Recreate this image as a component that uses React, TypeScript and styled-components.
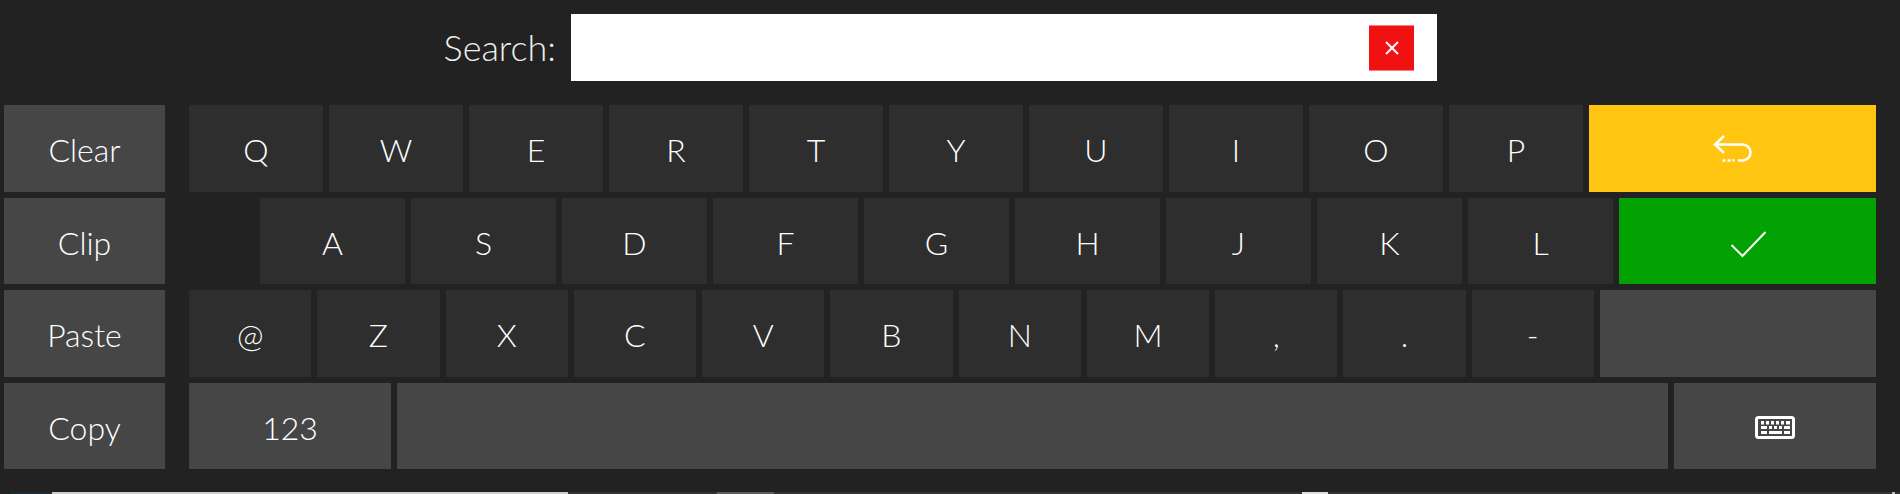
import React from 'react';
import styled, { createGlobalStyle } from 'styled-components';

const GlobalStyle = createGlobalStyle`
    html, body {
        margin: 0;
        height: 100%;
        overflow: hidden;
        background: #222222;
    }
`;

const Page = styled.div`
    height: 494px;
    overflow: hidden;
    display: flex;
    flex-direction: column;
    background: #222222;
    color: #ffffff;
    font-family: "Lato", "Liberation Sans", sans-serif;
    font-weight: 300;
`;

const SearchBar = styled.div`
    display: grid;
    grid-template-columns: 571px 866px;
    align-items: center;
    padding-top: 14px;
`;

const SearchLabel = styled.label`
    font-size: 36px;
    color: #eeeeee;
    text-align: right;
    padding: 0 15px 2px 0;
`;

const SearchField = styled.div`
    height: 67px;
    background: #ffffff;
    display: flex;
    align-items: center;
    justify-content: flex-end;
    padding-right: 23px;
`;

const ClearButton = styled.button`
    width: 45px;
    height: 46px;
    padding: 0;
    display: flex;
    align-items: center;
    justify-content: center;
    background: #f21111;
    border: 0;
    border-top: 1px solid #fb7b7b;
    border-bottom: 1px solid #fb7b7b;
`;

const Keyboard = styled.div`
    display: flex;
    gap: 24px;
    margin-top: 24px;
    padding: 0 24px 0 4px;
`;

const SideColumn = styled.div`
    width: 161px;
    flex: none;
    display: grid;
    grid-auto-rows: 86.5px;
    gap: 6px;
`;

const KeyRows = styled.div`
    flex: 1;
    display: grid;
    grid-auto-rows: 86.5px;
    gap: 6px;
`;

const KeyRow = styled.div<{ $indent?: number }>`
    display: flex;
    gap: 6px;
    padding-left: ${(p) => p.$indent || 0}px;
`;

const KEY_COLORS = {
    letter: '#2e2e2e',
    action: '#464646',
    enter: '#ffc511',
    ok: '#02a202',
};

const Key = styled.button<{ $width?: number; $kind?: keyof typeof KEY_COLORS }>`
    width: ${(p) => (p.$width ? `${p.$width}px` : '100%')};
    flex: ${(p) => (p.$width ? 'none' : '1')};
    height: 100%;
    padding: 0;
    display: flex;
    align-items: center;
    justify-content: center;
    border: 0;
    border-radius: 0;
    background: ${(p) => KEY_COLORS[p.$kind || 'letter']};
    color: #ffffff;
    font-family: inherit;
    font-weight: 300;
    font-size: 32px;
`;

const KeyText = styled.span`
    padding-top: 3px;
`;

const KeyboardSvg = styled.svg`
    margin-top: 4px;
`;

const BottomStrip = styled.div`
    display: flex;
    height: 2px;
    margin-top: 23px;
`;

const StripPart = styled.div<{ $width: number; $color: string }>`
    width: ${(p) => p.$width}px;
    flex: none;
    background: ${(p) => p.$color};
`;

const rows = ['QWERTYUIOP', 'ASDFGHJKL', '@ZXCVBNM,.-'];

const strip: [number, string][] = [
    [10, '#222222'],
    [42, '#1c2a32'],
    [516, '#cccccc'],
    [149, '#333333'],
    [57, '#5c5c5c'],
    [528, '#333333'],
    [26, '#dddddd'],
    [564, '#333333'],
    [3, '#bbbbbb'],
    [5, '#333333'],
];

const CloseIcon = () => (
    <svg width="14" height="14" viewBox="0 0 14 14" fill="none" stroke="#fff" strokeWidth="2">
        <path d="M1 1l12 12M13 1L1 13" />
    </svg>
);

const EnterIcon = () => (
    <svg width="46" height="34" viewBox="0 0 46 34" fill="none" stroke="#fff" strokeWidth="2.5">
        <path d="M14 5l-9 8.5 9 8.5M5 13.500h27.500a8 8 0 0 1 0 16h-4.500" />
        <path d="M12.500 29.500h12" strokeDasharray="3 2" />
    </svg>
);

const CheckIcon = () => (
    <svg width="40" height="34" viewBox="0 0 40 34" fill="none" stroke="#fff" strokeWidth="2">
        <path d="M3.500 21l11 11 23-24" />
    </svg>
);

const KeyboardIcon = () => (
    <KeyboardSvg width="40" height="23" viewBox="0 0 40 23" fill="#fff">
        <rect x="1.500" y="1.500" width="37" height="20" rx="2" fill="none" stroke="#fff" strokeWidth="3" />
        <path d="M6 5h3v3.500H6zM11 5h3v3.500h-3zM16 5h3v3.500h-3zM21 5h3v3.500h-3zM26 5h3v3.500h-3zM31 5h4v3.500h-4z" />
        <path d="M6 10h6v3h-6zM14 10h3v3h-3zM19 10h3v3h-3zM24 10h3v3h-3zM29 10h6v3h-6z" />
        <path d="M6 15h6v3h-6zM14 15h13v3H14zM29 15h6v3h-6z" />
    </KeyboardSvg>
);

export default function App() {
    return (
        <Page>
            <GlobalStyle />
            <SearchBar>
                <SearchLabel>Search:</SearchLabel>
                <SearchField>
                    <ClearButton aria-label="Clear search">
                        <CloseIcon />
                    </ClearButton>
                </SearchField>
            </SearchBar>
            <Keyboard>
                <SideColumn>
                    {['Clear', 'Clip', 'Paste', 'Copy'].map((label) => (
                        <Key key={label} $kind="action"><KeyText>{label}</KeyText></Key>
                    ))}
                </SideColumn>
                <KeyRows>
                    <KeyRow>
                        {rows[0].split('').map((c) => (
                            <Key key={c} $width={134}><KeyText>{c}</KeyText></Key>
                        ))}
                        <Key $kind="enter" aria-label="Enter"><EnterIcon /></Key>
                    </KeyRow>
                    <KeyRow $indent={71}>
                        {rows[1].split('').map((c) => (
                            <Key key={c} $width={145}><KeyText>{c}</KeyText></Key>
                        ))}
                        <Key $kind="ok" aria-label="OK"><CheckIcon /></Key>
                    </KeyRow>
                    <KeyRow>
                        {rows[2].split('').map((c) => (
                            <Key key={c} $width={122.27}><KeyText>{c}</KeyText></Key>
                        ))}
                        <Key $kind="action" />
                    </KeyRow>
                    <KeyRow>
                        <Key $kind="action" $width={202}><KeyText>123</KeyText></Key>
                        <Key $kind="action" />
                        <Key $kind="action" $width={202} aria-label="Keyboard"><KeyboardIcon /></Key>
                    </KeyRow>
                </KeyRows>
            </Keyboard>
            <BottomStrip>
                {strip.map(([w, color], i) => (
                    <StripPart key={i} $width={w} $color={color} />
                ))}
            </BottomStrip>
        </Page>
    );
}
